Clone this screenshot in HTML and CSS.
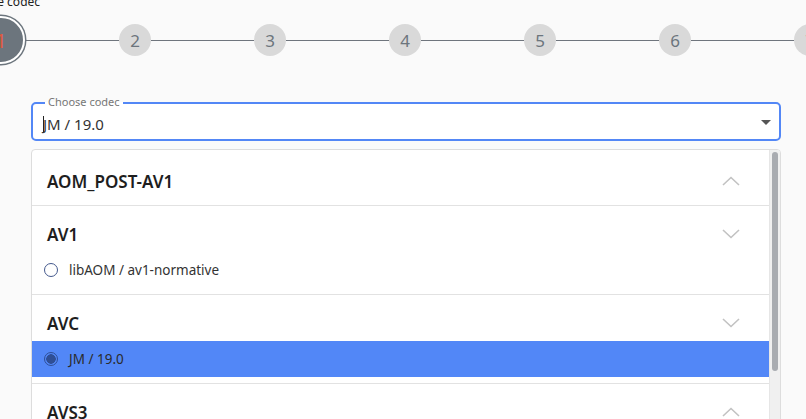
FILE: index.html
```html
<!DOCTYPE html>
<html>
<head>
<meta charset="utf-8">
<link rel="stylesheet" href="styles.css">
</head>
<body>
<div class="stepper">
  <div class="step active"><span class="step-label">Choose codec</span><span class="num">1</span></div>
  <div class="line first"></div>
  <div class="step"><span class="num">2</span></div>
  <div class="line"></div>
  <div class="step"><span class="num">3</span></div>
  <div class="line"></div>
  <div class="step"><span class="num">4</span></div>
  <div class="line"></div>
  <div class="step"><span class="num">5</span></div>
  <div class="line"></div>
  <div class="step"><span class="num">6</span></div>
  <div class="line"></div>
  <div class="step"><span class="num">7</span></div>
</div>

<div class="content">
  <div class="field">
    <span class="field-label">Choose codec</span>
    <div class="field-value"><span class="caret"></span>JM / 19.0</div>
    <svg class="arrow" width="10" height="5" viewBox="0 0 10 5"><path d="M0 0 L10 0 L5 5 Z" fill="#555"/></svg>
  </div>

  <div class="panel">
    <div class="list">
      <div class="group">
        <div class="group-head"><span class="group-title">AOM_POST-AV1</span>
          <svg class="chev" width="18" height="10" viewBox="0 0 18 10"><path d="M1 9 L9 1.5 L17 9" fill="none" stroke="#c2c2c2" stroke-width="1.6"/></svg>
        </div>
      </div>
      <div class="group">
        <div class="group-head"><span class="group-title">AV1</span>
          <svg class="chev" width="18" height="10" viewBox="0 0 18 10"><path d="M1 1 L9 8.5 L17 1" fill="none" stroke="#c2c2c2" stroke-width="1.6"/></svg>
        </div>
        <div class="option"><span class="radio"></span><span>libAOM / av1-normative</span></div>
      </div>
      <div class="group">
        <div class="group-head"><span class="group-title">AVC</span>
          <svg class="chev" width="18" height="10" viewBox="0 0 18 10"><path d="M1 1 L9 8.5 L17 1" fill="none" stroke="#c2c2c2" stroke-width="1.6"/></svg>
        </div>
        <div class="option selected"><span class="radio checked"></span><span>JM / 19.0</span></div>
      </div>
      <div class="group">
        <div class="group-head"><span class="group-title">AVS3</span>
          <svg class="chev" width="18" height="10" viewBox="0 0 18 10"><path d="M1 9 L9 1.5 L17 9" fill="none" stroke="#c2c2c2" stroke-width="1.6"/></svg>
        </div>
        <div class="option"><span class="radio"></span><span>HPM / 12.0</span></div>
      </div>
    </div>
    <div class="scrollbar"><div class="thumb"></div></div>
  </div>
</div>
</body>
</html>
```

FILE: styles.css
```css
html, body {
  margin: 0;
  padding: 0;
  background: #fafafa;
  font-family: "Noto Sans", "Open Sans", sans-serif;
  color: #222;
  overflow: hidden;
  height: 419px;
}

.stepper {
  display: flex;
  align-items: center;
  padding-top: 16px;
  margin-left: -23px;
  height: 48px;
}

.step {
  position: relative;
  flex: none;
  width: 32px;
  height: 32px;
  border-radius: 50%;
  background: #d9d9d9;
  display: flex;
  align-items: center;
  justify-content: center;
  color: #6c757d;
  font-size: 17px;
}

.step.active {
  width: 44px;
  height: 44px;
  background: #6c757d;
  border: 2px solid #fff;
  box-shadow: 0 0 0 1.5px #6c757d;
  color: #e0583f;
  font-size: 20px;
}

.step-label {
  position: absolute;
  top: -23px;
  left: 50%;
  transform: translateX(-50%);
  white-space: nowrap;
  font-size: 12px;
  color: #222;
  line-height: 14px;
}

.line {
  flex: none;
  width: 103px;
  height: 1px;
  background: #6f757d;
}

.line.first {
  width: 94px;
}

.content {
  padding-left: 31px;
  width: 750px;
  margin-top: 38px;
}

.field {
  position: relative;
  height: 35px;
  border: 2px solid #5387f6;
  border-radius: 5px;
  background: #fff;
  display: flex;
  align-items: center;
  padding: 0 10px;
}

.field-label {
  position: absolute;
  top: -8px;
  left: 12px;
  padding: 0 3px;
  font-size: 11px;
  line-height: 12px;
  color: #777;
  background: linear-gradient(#fafafa 50%, #fff 50%);
}

.field-value {
  flex: 1;
  font-size: 15px;
  color: #333;
  padding-top: 4px;
  display: flex;
  align-items: center;
}

.caret {
  display: inline-block;
  width: 1px;
  height: 16px;
  background: #222;
  margin-right: -1px;
}

.arrow {
  margin-right: -2px;
  margin-top: 2px;
}

.panel {
  margin-top: 8px;
  height: 300px;
  border: 1px solid #ddd;
  border-radius: 4px;
  background: #fff;
  display: flex;
  overflow: hidden;
}

.list {
  flex: 1;
  padding-top: 3px;
}

.group {
  border-bottom: 1px solid #e2e2e2;
  padding-bottom: 6px;
}

.group-head {
  height: 46px;
  display: flex;
  align-items: flex-start;
  justify-content: space-between;
  padding: 0 29px 0 15px;
  box-sizing: border-box;
}

.group-title {
  font-size: 17px;
  font-weight: 600;
  line-height: 20px;
  margin-top: 19px;
  color: #1e1e1e;
}

.chev {
  margin-top: 23px;
}

.option {
  height: 36px;
  display: flex;
  align-items: center;
  padding-left: 12px;
  font-size: 13.5px;
  color: #333;
}

.option.selected {
  background: #5287f7;
  color: #2b2b2b;
}

.radio {
  width: 12px;
  height: 12px;
  border: 1.5px solid #44598d;
  border-radius: 50%;
  margin-right: 11px;
  box-sizing: content-box;
  flex: none;
}

.radio.checked {
  border-color: #2f4f96;
  background: radial-gradient(circle, #2f4f96 0 4.5px, transparent 5px);
}

.scrollbar {
  flex: none;
  width: 11px;
  background: #f0f0f0;
  border-left: 1px solid #e6e6e6;
  padding-top: 2px;
  box-sizing: border-box;
  display: flex;
  justify-content: center;
}

.thumb {
  width: 6px;
  height: 219px;
  border-radius: 3px;
  background: #a9acb1;
}
```
